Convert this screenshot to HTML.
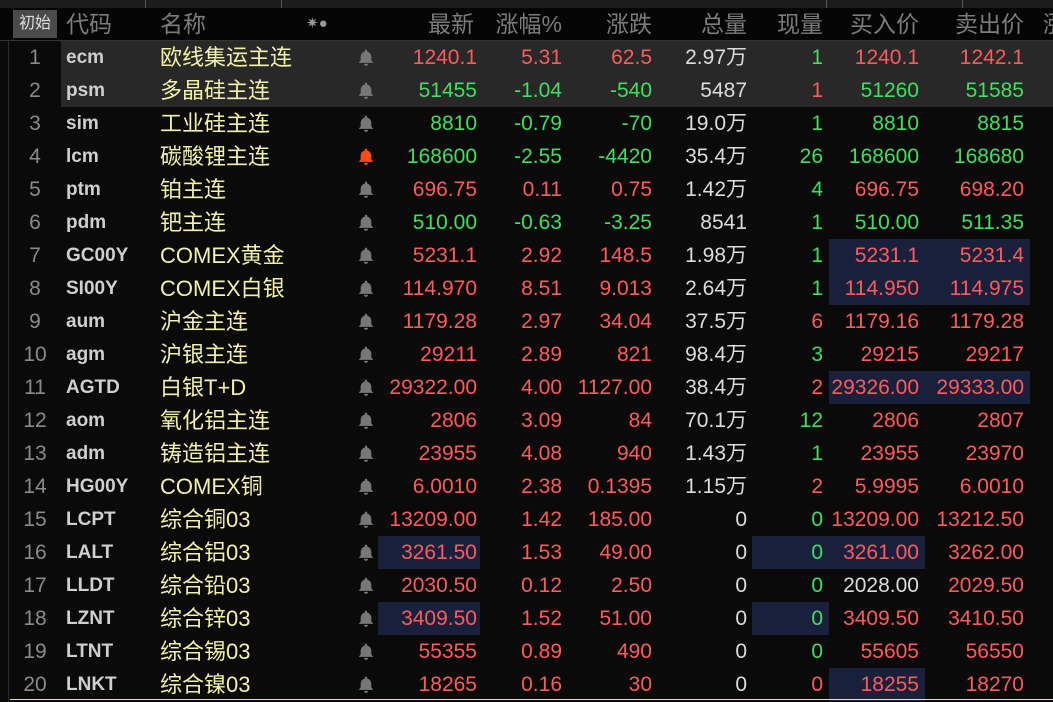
<!DOCTYPE html>
<html><head><meta charset="utf-8"><style>
*{margin:0;padding:0;box-sizing:border-box}
body{width:1053px;height:702px;background:#0a0a0a;overflow:hidden;position:relative;font-family:"Liberation Sans","Noto Sans CJK SC",sans-serif}
.top{position:absolute;left:0;top:0;width:1053px;height:8px;background:#1c1c1c}
.top i{position:absolute;top:0;width:1px;height:8px;background:#555}
.hdr{position:absolute;top:8px;left:0;width:1053px;height:33px;background:#050505;border-bottom:1px solid #333;color:#7c7c7c;font-size:23px}
.hdr span{position:absolute;top:0;line-height:32px;white-space:nowrap}
.init{position:absolute;left:13px;top:2px;width:44px;height:28px;background:#4a4a4a;color:#ddd;font-size:16px;text-align:center;line-height:28px}
.row{position:absolute;left:0;width:1053px;height:33px;font-size:21px}
.row span{position:absolute;top:0;height:33px;line-height:33px;white-space:nowrap}
.hl{position:absolute;left:61px;top:0;width:992px;height:33px;background:#282828}
.bx{position:absolute;top:0;height:33px;background:#18203c}
.i{left:0;width:70px;text-align:center;color:#8a8a8a}
.cd{left:66px;color:#cfcfcf;font-weight:bold;font-size:19px}
.nm{left:160px;color:#f2f2a8;font-size:22px}
.r{color:#ff5a5a}.g{color:#3ee05c}.w{color:#dcdcdc}
.a{right:576px}.b{right:491px}.c{right:401px}.d{right:306px}.e{right:230px}.f{right:134px}.h{right:29px}
.vl{position:absolute;left:8px;top:41px;width:1px;height:661px;background:#2a2a2a}
.yl{position:absolute;left:10px;top:699px;width:1043px;height:1px;background:#e8e890}
svg.b1{position:absolute;left:358px;top:8px}
</style></head><body>
<div class="top"><i style="left:145px"></i><i style="left:281px"></i><i style="left:826px"></i><i style="left:962px"></i></div>
<div class="hdr">
<div class="init">初始</div>
<span style="left:66px">代码</span><span style="left:160px">名称</span>
<span style="left:306px;font-size:15px;color:#999">✷●</span>
<span style="right:579px">最新</span><span style="right:491px">涨幅%</span><span style="right:401px">涨跌</span><span style="right:306px">总量</span><span style="right:230px">现量</span><span style="right:134px">买入价</span><span style="right:29px">卖出价</span><span style="left:1043px">涨</span>
</div>
<div class="vl"></div>

<svg width="0" height="0" style="position:absolute"><defs><symbol id="bl" viewBox="2 1 12 14"><path d="M8 1.5a1 1 0 0 1 1 1v.7c2.2.5 3.4 2.3 3.4 4.6v2.6l1.6 2H2l1.6-2V7.8c0-2.3 1.2-4.1 3.4-4.6v-.7a1 1 0 0 1 1-1zM6.3 13.2h3.4a1.7 1.7 0 0 1-3.4 0z"/></symbol></defs></svg>

<div class="row" style="top:41px"><div class="hl"></div><span class="i">1</span><span class="cd">ecm</span><span class="nm">欧线集运主连</span><svg class="b1" width="16" height="17" fill="#777"><use href="#bl"/></svg><span class="a r">1240.1</span><span class="b r">5.31</span><span class="c r">62.5</span><span class="d w">2.97万</span><span class="e g">1</span><span class="f r">1240.1</span><span class="h r">1242.1</span></div>
<div class="row" style="top:74px"><div class="hl"></div><span class="i">2</span><span class="cd">psm</span><span class="nm">多晶硅主连</span><svg class="b1" width="16" height="17" fill="#777"><use href="#bl"/></svg><span class="a g">51455</span><span class="b g">-1.04</span><span class="c g">-540</span><span class="d w">5487</span><span class="e r">1</span><span class="f g">51260</span><span class="h g">51585</span></div>
<div class="row" style="top:107px"><span class="i">3</span><span class="cd">sim</span><span class="nm">工业硅主连</span><svg class="b1" width="16" height="17" fill="#777"><use href="#bl"/></svg><span class="a g">8810</span><span class="b g">-0.79</span><span class="c g">-70</span><span class="d w">19.0万</span><span class="e g">1</span><span class="f g">8810</span><span class="h g">8815</span></div>
<div class="row" style="top:140px"><span class="i">4</span><span class="cd">lcm</span><span class="nm">碳酸锂主连</span><svg class="b1" width="16" height="17" fill="#ff4a10"><use href="#bl"/></svg><span class="a g">168600</span><span class="b g">-2.55</span><span class="c g">-4420</span><span class="d w">35.4万</span><span class="e g">26</span><span class="f g">168600</span><span class="h g">168680</span></div>
<div class="row" style="top:173px"><span class="i">5</span><span class="cd">ptm</span><span class="nm">铂主连</span><svg class="b1" width="16" height="17" fill="#777"><use href="#bl"/></svg><span class="a r">696.75</span><span class="b r">0.11</span><span class="c r">0.75</span><span class="d w">1.42万</span><span class="e g">4</span><span class="f r">696.75</span><span class="h r">698.20</span></div>
<div class="row" style="top:206px"><span class="i">6</span><span class="cd">pdm</span><span class="nm">钯主连</span><svg class="b1" width="16" height="17" fill="#777"><use href="#bl"/></svg><span class="a g">510.00</span><span class="b g">-0.63</span><span class="c g">-3.25</span><span class="d w">8541</span><span class="e g">1</span><span class="f g">510.00</span><span class="h g">511.35</span></div>
<div class="row" style="top:239px"><div class="bx" style="left:829px;width:201px"></div><span class="i">7</span><span class="cd">GC00Y</span><span class="nm">COMEX黄金</span><svg class="b1" width="16" height="17" fill="#777"><use href="#bl"/></svg><span class="a r">5231.1</span><span class="b r">2.92</span><span class="c r">148.5</span><span class="d w">1.98万</span><span class="e g">1</span><span class="f r">5231.1</span><span class="h r">5231.4</span></div>
<div class="row" style="top:272px"><div class="bx" style="left:829px;width:201px"></div><span class="i">8</span><span class="cd">SI00Y</span><span class="nm">COMEX白银</span><svg class="b1" width="16" height="17" fill="#777"><use href="#bl"/></svg><span class="a r">114.970</span><span class="b r">8.51</span><span class="c r">9.013</span><span class="d w">2.64万</span><span class="e g">1</span><span class="f r">114.950</span><span class="h r">114.975</span></div>
<div class="row" style="top:305px"><span class="i">9</span><span class="cd">aum</span><span class="nm">沪金主连</span><svg class="b1" width="16" height="17" fill="#777"><use href="#bl"/></svg><span class="a r">1179.28</span><span class="b r">2.97</span><span class="c r">34.04</span><span class="d w">37.5万</span><span class="e r">6</span><span class="f r">1179.16</span><span class="h r">1179.28</span></div>
<div class="row" style="top:338px"><span class="i">10</span><span class="cd">agm</span><span class="nm">沪银主连</span><svg class="b1" width="16" height="17" fill="#777"><use href="#bl"/></svg><span class="a r">29211</span><span class="b r">2.89</span><span class="c r">821</span><span class="d w">98.4万</span><span class="e g">3</span><span class="f r">29215</span><span class="h r">29217</span></div>
<div class="row" style="top:371px"><div class="bx" style="left:829px;width:201px"></div><span class="i">11</span><span class="cd">AGTD</span><span class="nm">白银T+D</span><svg class="b1" width="16" height="17" fill="#777"><use href="#bl"/></svg><span class="a r">29322.00</span><span class="b r">4.00</span><span class="c r">1127.00</span><span class="d w">38.4万</span><span class="e r">2</span><span class="f r">29326.00</span><span class="h r">29333.00</span></div>
<div class="row" style="top:404px"><span class="i">12</span><span class="cd">aom</span><span class="nm">氧化铝主连</span><svg class="b1" width="16" height="17" fill="#777"><use href="#bl"/></svg><span class="a r">2806</span><span class="b r">3.09</span><span class="c r">84</span><span class="d w">70.1万</span><span class="e g">12</span><span class="f r">2806</span><span class="h r">2807</span></div>
<div class="row" style="top:437px"><span class="i">13</span><span class="cd">adm</span><span class="nm">铸造铝主连</span><svg class="b1" width="16" height="17" fill="#777"><use href="#bl"/></svg><span class="a r">23955</span><span class="b r">4.08</span><span class="c r">940</span><span class="d w">1.43万</span><span class="e g">1</span><span class="f r">23955</span><span class="h r">23970</span></div>
<div class="row" style="top:470px"><span class="i">14</span><span class="cd">HG00Y</span><span class="nm">COMEX铜</span><svg class="b1" width="16" height="17" fill="#777"><use href="#bl"/></svg><span class="a r">6.0010</span><span class="b r">2.38</span><span class="c r">0.1395</span><span class="d w">1.15万</span><span class="e r">2</span><span class="f r">5.9995</span><span class="h r">6.0010</span></div>
<div class="row" style="top:503px"><span class="i">15</span><span class="cd">LCPT</span><span class="nm">综合铜03</span><svg class="b1" width="16" height="17" fill="#777"><use href="#bl"/></svg><span class="a r">13209.00</span><span class="b r">1.42</span><span class="c r">185.00</span><span class="d w">0</span><span class="e g">0</span><span class="f r">13209.00</span><span class="h r">13212.50</span></div>
<div class="row" style="top:536px"><div class="bx" style="left:378px;width:102px"></div><div class="bx" style="left:752px;width:173px"></div><span class="i">16</span><span class="cd">LALT</span><span class="nm">综合铝03</span><svg class="b1" width="16" height="17" fill="#777"><use href="#bl"/></svg><span class="a r">3261.50</span><span class="b r">1.53</span><span class="c r">49.00</span><span class="d w">0</span><span class="e g">0</span><span class="f r">3261.00</span><span class="h r">3262.00</span></div>
<div class="row" style="top:569px"><span class="i">17</span><span class="cd">LLDT</span><span class="nm">综合铅03</span><svg class="b1" width="16" height="17" fill="#777"><use href="#bl"/></svg><span class="a r">2030.50</span><span class="b r">0.12</span><span class="c r">2.50</span><span class="d w">0</span><span class="e g">0</span><span class="f w">2028.00</span><span class="h r">2029.50</span></div>
<div class="row" style="top:602px"><div class="bx" style="left:378px;width:102px"></div><div class="bx" style="left:752px;width:77px"></div><span class="i">18</span><span class="cd">LZNT</span><span class="nm">综合锌03</span><svg class="b1" width="16" height="17" fill="#777"><use href="#bl"/></svg><span class="a r">3409.50</span><span class="b r">1.52</span><span class="c r">51.00</span><span class="d w">0</span><span class="e g">0</span><span class="f r">3409.50</span><span class="h r">3410.50</span></div>
<div class="row" style="top:635px"><span class="i">19</span><span class="cd">LTNT</span><span class="nm">综合锡03</span><svg class="b1" width="16" height="17" fill="#777"><use href="#bl"/></svg><span class="a r">55355</span><span class="b r">0.89</span><span class="c r">490</span><span class="d w">0</span><span class="e g">0</span><span class="f r">55605</span><span class="h r">56550</span></div>
<div class="row" style="top:668px"><div class="bx" style="left:829px;width:96px"></div><span class="i">20</span><span class="cd">LNKT</span><span class="nm">综合镍03</span><svg class="b1" width="16" height="17" fill="#777"><use href="#bl"/></svg><span class="a r">18265</span><span class="b r">0.16</span><span class="c r">30</span><span class="d w">0</span><span class="e r">0</span><span class="f r">18255</span><span class="h r">18270</span></div>
<div class="yl"></div>
</body></html>
